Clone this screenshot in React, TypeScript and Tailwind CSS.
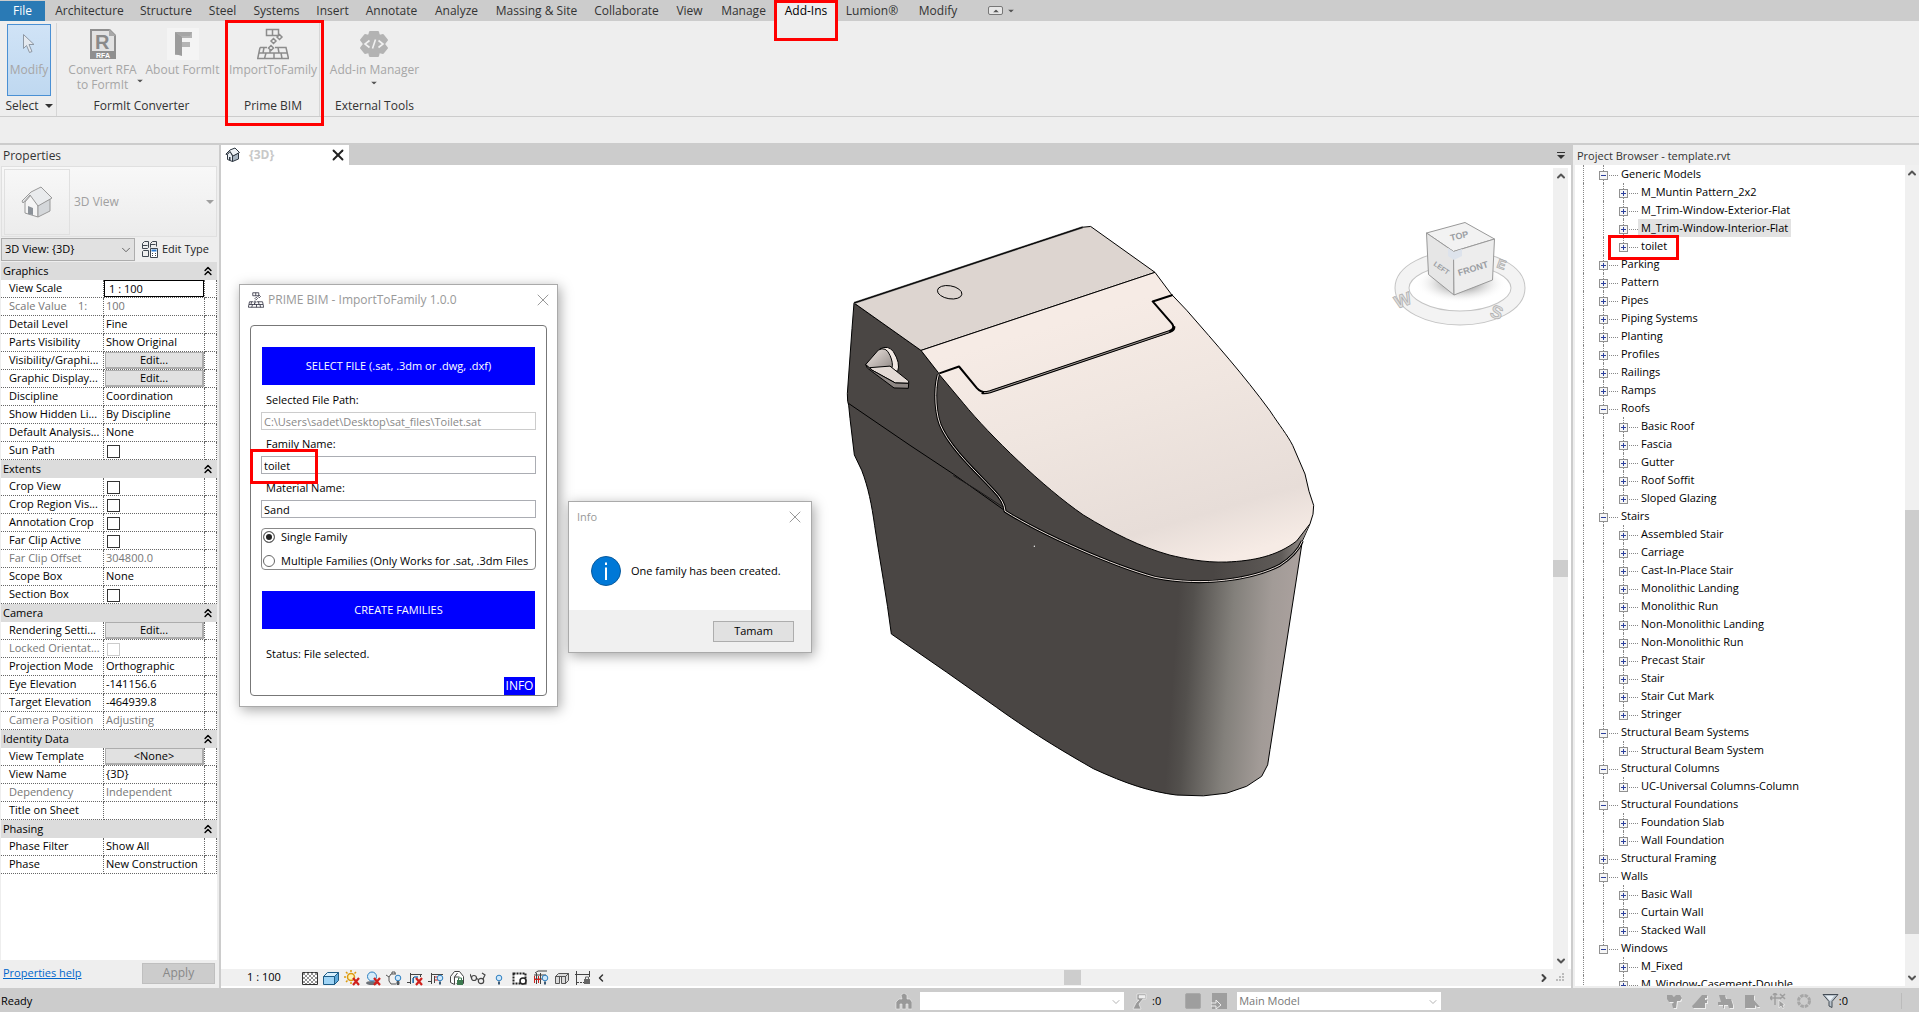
import type { ReactNode } from 'react';
import { X, ChevronUp, ChevronDown, ChevronLeft, ChevronRight, ChevronsUp } from 'lucide-react';

const tabs = [
  { name: 'Architecture', width: 'w-[85px]' },
  { name: 'Structure', width: 'w-[68px]' },
  { name: 'Steel', width: 'w-[45px]' },
  { name: 'Systems', width: 'w-[63px]' },
  { name: 'Insert', width: 'w-[49px]' },
  { name: 'Annotate', width: 'w-[69px]' },
  { name: 'Analyze', width: 'w-[61px]' },
  { name: 'Massing & Site', width: 'w-[99px]' },
  { name: 'Collaborate', width: 'w-[81px]' },
  { name: 'View', width: 'w-[45px]' },
  { name: 'Manage', width: 'w-[63px]' },
  { name: 'Add-Ins', width: 'w-[62px]' },
  { name: 'Lumion®', width: 'w-[70px]' },
  { name: 'Modify', width: 'w-[62px]' },
];

type Prop = {
  name: string;
  value?: string;
  kind?: 'text' | 'input' | 'button' | 'check';
  muted?: boolean;
};

const groups: { title: string; rows: Prop[] }[] = [
  {
    title: 'Graphics',
    rows: [
      { name: 'View Scale', value: '1 : 100', kind: 'input' },
      { name: 'Scale Value    1:', value: '100', muted: true },
      { name: 'Detail Level', value: 'Fine' },
      { name: 'Parts Visibility', value: 'Show Original' },
      { name: 'Visibility/Graphi...', value: 'Edit...', kind: 'button' },
      { name: 'Graphic Display...', value: 'Edit...', kind: 'button' },
      { name: 'Discipline', value: 'Coordination' },
      { name: 'Show Hidden Li...', value: 'By Discipline' },
      { name: 'Default Analysis...', value: 'None' },
      { name: 'Sun Path', kind: 'check' },
    ],
  },
  {
    title: 'Extents',
    rows: [
      { name: 'Crop View', kind: 'check' },
      { name: 'Crop Region Vis...', kind: 'check' },
      { name: 'Annotation Crop', kind: 'check' },
      { name: 'Far Clip Active', kind: 'check' },
      { name: 'Far Clip Offset', value: '304800.0', muted: true },
      { name: 'Scope Box', value: 'None' },
      { name: 'Section Box', kind: 'check' },
    ],
  },
  {
    title: 'Camera',
    rows: [
      { name: 'Rendering Setti...', value: 'Edit...', kind: 'button' },
      { name: 'Locked Orientat...', kind: 'check', muted: true },
      { name: 'Projection Mode', value: 'Orthographic' },
      { name: 'Eye Elevation', value: '-141156.6' },
      { name: 'Target Elevation', value: '-464939.8' },
      { name: 'Camera Position', value: 'Adjusting', muted: true },
    ],
  },
  {
    title: 'Identity Data',
    rows: [
      { name: 'View Template', value: '<None>', kind: 'button' },
      { name: 'View Name', value: '{3D}' },
      { name: 'Dependency', value: 'Independent', muted: true },
      { name: 'Title on Sheet', value: '' },
    ],
  },
  {
    title: 'Phasing',
    rows: [
      { name: 'Phase Filter', value: 'Show All' },
      { name: 'Phase', value: 'New Construction' },
    ],
  },
];

const tree: { name: string; children?: string[] }[] = [
  {
    name: 'Generic Models',
    children: ['M_Muntin Pattern_2x2', 'M_Trim-Window-Exterior-Flat', 'M_Trim-Window-Interior-Flat', 'toilet'],
  },
  { name: 'Parking' },
  { name: 'Pattern' },
  { name: 'Pipes' },
  { name: 'Piping Systems' },
  { name: 'Planting' },
  { name: 'Profiles' },
  { name: 'Railings' },
  { name: 'Ramps' },
  { name: 'Roofs', children: ['Basic Roof', 'Fascia', 'Gutter', 'Roof Soffit', 'Sloped Glazing'] },
  {
    name: 'Stairs',
    children: [
      'Assembled Stair',
      'Carriage',
      'Cast-In-Place Stair',
      'Monolithic Landing',
      'Monolithic Run',
      'Non-Monolithic Landing',
      'Non-Monolithic Run',
      'Precast Stair',
      'Stair',
      'Stair Cut Mark',
      'Stringer',
    ],
  },
  { name: 'Structural Beam Systems', children: ['Structural Beam System'] },
  { name: 'Structural Columns', children: ['UC-Universal Columns-Column'] },
  { name: 'Structural Foundations', children: ['Foundation Slab', 'Wall Foundation'] },
  { name: 'Structural Framing' },
  { name: 'Walls', children: ['Basic Wall', 'Curtain Wall', 'Stacked Wall'] },
  { name: 'Windows', children: ['M_Fixed', 'M_Window-Casement-Double'] },
];

/* ---------- icons ---------- */

function BricksIcon({ className }: { className: string }) {
  return (
    <svg viewBox="0 0 32 32" className={className} fill="none" stroke="currentColor" strokeWidth="1.5">
      <path d="M9.5 1.5h12v6h-12zM15.500 1.5v6" />
      <path d="M20 9l2.500-2.500 2.500 2.500-2.500 2.500zM14 13l2.500-2.500 2.500 2.500-2.500 2.500zM11.500 20l2.500-2.500 2.500 2.500-2.500 2.500z" />
      <path d="M3 19.500h7M18 19.500h11l2.500 11H.7L3 19.500M2 25h28M9 25l-1.500 5.500M17 25v5.500M24 25l1 5.500M13 22v3M21 19.500l1 5.500M7 19.500L6 25" />
    </svg>
  );
}

function RfaIcon() {
  return (
    <svg viewBox="0 0 26 30" className="h-[30px] w-[26px]">
      <path d="M0 0h20l6 6v24H0z" fill="#8f8f8f" />
      <path d="M2 2h17v5h5v15H2z" fill="#e2e2e2" />
      <path d="M19 0l7 7h-7z" fill="#a8a8a8" />
      <text x="5" y="20" fontSize="20" fontWeight="700" fill="#8a8a8a" fontFamily="Liberation Sans, sans-serif">R</text>
      <text x="6" y="29" fontSize="7" fontWeight="700" fill="#fff" fontFamily="Liberation Sans, sans-serif">RFA</text>
    </svg>
  );
}

function FormItIcon() {
  return (
    <svg viewBox="0 0 32 32" className="h-8 w-8">
      <path d="M0 0h32v32H0z" fill="#f4f4f4" />
      <path d="M8 4h17v6H15v4h8v5h-8v8H8z" fill="#b4b4b4" />
      <path d="M8 4l7 5v19l-7-2z" fill="#9c9c9c" />
      <path d="M8 4h17l-2 4H14z" fill="#a6a6a6" />
    </svg>
  );
}

function GearCodeIcon() {
  return (
    <svg viewBox="0 0 28 28" className="h-7 w-7">
      <path
        d="M10 2h8l1 4 4-1 4 5-3 4 3 4-4 5-4-1-1 4h-8l-1-4-4 1-4-5 3-4-3-4 4-5 4 1z"
        fill="#b3b3b3"
        stroke="#b3b3b3"
        strokeWidth="2"
        strokeLinejoin="round"
      />
      <path d="M9.500 10.500L5 14l4.500 3.500M18.500 10.500L23 14l-4.500 3.500M15.500 9.500l-3 9" fill="none" stroke="#f2f2f2" strokeWidth="1.6" />
    </svg>
  );
}

function CursorIcon() {
  return (
    <svg viewBox="0 0 14 22" className="h-[22px] w-[14px]">
      <path d="M1.500 1.500v14l3-3 3 7 2.500-1-3-7h5z" fill="#e4e9ef" stroke="#8e98a4" />
    </svg>
  );
}

function HouseIcon({ className }: { className: string }) {
  return (
    <svg viewBox="0 0 32 32" className={className} strokeLinejoin="round">
      <path d="M4 16v11l13 4V19L10 9z" fill="#f5f5f5" stroke="#999" />
      <path d="M17 19v12l12-6V13z" fill="#d4d7da" stroke="#999" />
      <path d="M1 15L10 6l10-5 11 11-14 8L9 9l-7 8z" fill="#e9ebed" stroke="#999" />
      <path d="M7 20l5 2v7l-5-1z" fill="#8c9299" />
    </svg>
  );
}

function TabHouseIcon() {
  return (
    <svg viewBox="0 0 16 16" className="mr-2 size-4" strokeLinejoin="round" stroke="#2d3640">
      <path d="M2.500 7.500v5l5 2V9L5 4z" fill="#e8edf2" />
      <path d="M7.500 9v5.500l6-2.500V6z" fill="#a9b6c2" />
      <path d="M1 7l4-4 5-2 4.500 4.500L8 9 5 4.500 1.500 8z" fill="#eef2f5" />
      <path d="M4 10h1.500v3.500L4 13z" fill="#2d3640" stroke="none" />
    </svg>
  );
}

function EditTypeIcon() {
  return (
    <svg viewBox="0 0 17 17" className="h-[17px] w-[17px]" fill="none" stroke="#3f4750">
      <path d="M1.500 2.500l2-2h4v6l-1 1h-5zM9.500 2.500l2-2h4v5M9.500 2.500v4M1.500 10.500l1-1h5v6h-6zM1.500 4.500h5M9.500 3.500h5" />
      <path d="M9.500 7.500h7v9h-7z" fill="#fff" />
      <path d="M10.500 9.500h5" stroke="#2a7ad0" strokeWidth="2" />
      <path d="M11 12.500h1M14 12.500h1M11 14.500h1M14 14.500h1" />
    </svg>
  );
}

function RedX() {
  return <path d="M9 8l6 7M15 8l-6 7" stroke="#d0201c" strokeWidth="2.200" fill="none" />;
}

function SmallBulb() {
  return (
    <g>
      <circle cx="12" cy="8" r="2.800" fill="#cfe8fb" stroke="#2e7fc0" />
      <path d="M11 11.500h2v3h-2z" fill="#3d5a75" />
    </g>
  );
}

const viewIcons: { label: string; art: ReactNode }[] = [
  {
    label: 'Detail level',
    art: (
      <g>
        <path d="M.5 2.500h15v12H.5z" fill="#fff" stroke="#333" />
        <path d="M1 5l3-3M1 9l7-7M1 13l11-11M4 14L15 3M8 14l7-7M12 14l3-3M12 2l3 3M8 2l7 7M4 2l11 11M1 3l11 11M1 7l7 7M1 11l3 3" stroke="#666" strokeWidth=".7" />
      </g>
    ),
  },
  {
    label: 'Visual style',
    art: (
      <g stroke="#1e5c86" strokeLinejoin="round">
        <path d="M.5 6.500h11v8H.5z" fill="#9fd4f5" />
        <path d="M.5 6.500l4-4h11l-4 4z" fill="#d7effd" />
        <path d="M11.500 6.500l4-4v8l-4 4z" fill="#5fa8d8" />
      </g>
    ),
  },
  {
    label: 'Sun path off',
    art: (
      <g>
        <circle cx="7" cy="7" r="3.500" fill="#fff2b8" stroke="#dc9a10" strokeWidth="1.500" />
        <path d="M7 0v2M0 7h2M2 2l1.500 1.500M12 2l-1.500 1.500M2 12l1.500-1.500M7 12v2" stroke="#dc9a10" strokeWidth="1.500" />
        <RedX />
      </g>
    ),
  },
  {
    label: 'Shadows off',
    art: (
      <g>
        <ellipse cx="7" cy="13" rx="6" ry="2" fill="#6d7278" />
        <circle cx="7" cy="6.500" r="4.500" fill="#d5ecfa" stroke="#2e7fc0" />
        <RedX />
      </g>
    ),
  },
  {
    label: 'Rendering dialog',
    art: (
      <g fill="none" stroke="#555">
        <path d="M0 5l3 2v4l2 3h5M3 7l2-3h5M6 4V2h3v2" />
        <SmallBulb />
      </g>
    ),
  },
  {
    label: 'Crop view off',
    art: (
      <g>
        <path d="M0 12.500h4M3.500 3v11M3 4.500h12M13.500 4v3M6.500 7v6" stroke="#444" fill="none" />
        <path d="M7 7h4M6 8v5" stroke="#2e7fc0" strokeWidth="1.500" />
        <RedX />
      </g>
    ),
  },
  {
    label: 'Crop region',
    art: (
      <g>
        <path d="M0 11.500h4M3.500 3v11M3 4.500h12M6.500 6v7" stroke="#444" fill="none" />
        <path d="M7 7h4M7 10h3" stroke="#d0201c" />
        <SmallBulb />
      </g>
    ),
  },
  {
    label: 'Locked 3D view',
    art: (
      <g>
        <path d="M1.500 6.500l4-5h5l4 5v7h-7M1.500 6.500v6l4 2V7l3-4M5.500 7h5" fill="#fff" stroke="#444" />
        <path d="M8 10h6v5H8z" fill="#3d7a50" />
        <path d="M9.500 10V8h3v2" stroke="#3d7a50" fill="none" />
      </g>
    ),
  },
  {
    label: 'Temporary hide',
    art: (
      <g fill="none" stroke="#444" strokeWidth="1.200">
        <circle cx="4" cy="8" r="2.500" />
        <circle cx="11" cy="11" r="2.700" />
        <path d="M1.500 8L0 4M6.500 8.500l2 1M13 9l2-4-3-2" />
      </g>
    ),
  },
  {
    label: 'Reveal hidden',
    art: (
      <g transform="translate(-4 0)">
        <SmallBulb />
      </g>
    ),
  },
  {
    label: 'Worksharing display',
    art: (
      <g>
        <path d="M1.500 3.500h12v10h-12z" fill="#fff" stroke="#222" strokeWidth="2" strokeDasharray="2 1" />
        <circle cx="11" cy="11" r="3" fill="#fff" stroke="#222" strokeWidth="1.500" />
      </g>
    ),
  },
  {
    label: 'Temporary view properties',
    art: (
      <g>
        <path d="M1 5h12M1 9h9M3.500 3v11M7.500 3v11M2 3l3-2h9" stroke="#444" fill="none" />
        <path d="M1.500 6v7M5.500 6v7M1 9.500h7" stroke="#d0201c" />
        <SmallBulb />
      </g>
    ),
  },
  {
    label: 'Analytical model',
    art: (
      <g stroke="#555" fill="#dadada">
        <path d="M1.500 6.500h4v7h-4zM7.500 6.500h4v7h-4zM1.500 6.500l3-3h10l-3 3zM11.500 6.500l3-3v7l-3 3z" />
      </g>
    ),
  },
  {
    label: 'Reveal constraints',
    art: (
      <g>
        <path d="M1.500 1v14M0 4.500h15M14.500 1v6" stroke="#444" fill="none" />
        <path d="M2 12.500h7" stroke="#444" strokeDasharray="2 1" />
        <path d="M9 9h6v5H9z" fill="#666" />
        <path d="M10.500 9V7h3v2" stroke="#666" fill="none" />
      </g>
    ),
  },
];

const selectIcons: { label: string; d: string }[] = [
  { label: 'Select links', d: 'M1 2h5l2 2 2-2h4l2 3-2 3h-3l-1 7H7l-1-4 2-2H3L1 6z' },
  { label: 'Select underlay', d: 'M0 13l3-3 7-8h5v3h-2v2h2v3h-2v5H1z' },
  { label: 'Select pinned', d: 'M1 2h6l1 4h5l2 6v3h-4l-1-3H6v3H5v-3H0V9h3z' },
  { label: 'Select by face', d: 'M1 2h9v5l6 7h-3l-2-2v3H1z' },
];

/* ---------- small pieces ---------- */

function Highlight({ className }: { className: string }) {
  return <div className={`pointer-events-none absolute z-20 border-3 border-[#ff0000] ${className}`} />;
}

function Caret({ className = '' }: { className?: string }) {
  return (
    <svg viewBox="0 0 8 4" className={`h-1 w-2 ${className}`}>
      <path d="M0 0h8L4 4z" fill="currentColor" />
    </svg>
  );
}

function RibbonPanel({ title, className, children }: { title: ReactNode; className: string; children: ReactNode }) {
  return (
    <section className={`flex h-[93px] flex-col justify-between border-r border-[#d6d6d6] ${className}`}>
      <div className="flex justify-center text-[#a6a6a6]">{children}</div>
      <h2 className="flex h-5 items-center justify-center gap-1.5 text-[#333]">{title}</h2>
    </section>
  );
}

function RibbonButton({ icon, label, className = '' }: { icon: ReactNode; label: ReactNode; className?: string }) {
  return (
    <button className={`mt-[3px] flex flex-col items-center whitespace-nowrap leading-[15px] ${className}`}>
      <span className="flex h-9 items-center">{icon}</span>
      <span>{label}</span>
    </button>
  );
}

/* ---------- ribbon ---------- */

function Ribbon() {
  return (
    <header className="relative shrink-0 bg-[#eee] text-xs">
      <nav className="flex h-[21px] items-stretch bg-[#ccc] text-[#333]">
        <button className="mr-0.5 mt-px w-[45px] bg-[#2a7ab5] text-white">File</button>
        {tabs.map(tab => (
          <button
            key={tab.name}
            className={`shrink-0 whitespace-nowrap ${tab.width} ${tab.name === 'Add-Ins' ? 'bg-[#eee] text-black' : ''}`}
          >
            {tab.name}
          </button>
        ))}
        <button aria-label="Minimize ribbon" className="ml-[19px] flex items-center gap-1 text-[#555]">
          <span className="flex h-[9px] w-[15px] items-center justify-center rounded-xs border border-[#777] bg-[#e6e6e6]">
            <Caret className="rotate-180 scale-75" />
          </span>
          <Caret className="scale-75" />
        </button>
      </nav>

      <div className="flex h-24 border-b border-[#ccc] pt-0.5">
        <RibbonPanel title={<>Select <Caret /></>} className="w-[57px] pl-0.5">
          <button className="mt-px flex h-[72px] w-11 flex-col items-center border border-[#4a90d4] bg-gradient-to-b from-[#d0e3f6] to-[#bfd8f0] leading-[15px]">
            <span className="flex h-[37px] items-center"><CursorIcon /></span>
            <span>Modify</span>
          </button>
        </RibbonPanel>
        <RibbonPanel title="FormIt Converter" className="w-[170px]">
          <RibbonButton
            icon={<RfaIcon />}
            className="ml-2 w-[66px]"
            label={<>Convert RFA<br />to FormIt</>}
          />
          <Caret className="mt-14 scale-75 text-[#555]" />
          <RibbonButton icon={<FormItIcon />} label="About FormIt" className="w-[78px]" />
        </RibbonPanel>
        <RibbonPanel title="Prime BIM" className="w-[93px]">
          <RibbonButton icon={<BricksIcon className="h-8 w-8 text-[#8c8c8c]" />} label="ImportToFamily" />
        </RibbonPanel>
        <RibbonPanel title="External Tools" className="w-[110px] border-transparent">
          <RibbonButton
            icon={<GearCodeIcon />}
            label={<>Add-in Manager<Caret className="mx-auto mt-1 scale-75 text-[#555]" /></>}
          />
        </RibbonPanel>
      </div>
      <div className="h-[28px] border-b-2 border-[#ccc]" />

      <Highlight className="left-[774px] top-0 h-[41px] w-16" />
      <Highlight className="left-[225px] top-5 h-[106px] w-[99px]" />
    </header>
  );
}

/* ---------- properties ---------- */

function PropertyValue({ row }: { row: Prop }) {
  if (row.kind === 'input') {
    return (
      <input
        aria-label={row.name}
        defaultValue={row.value}
        className="block h-[17px] w-full border border-black bg-white px-1 pb-px outline-none"
      />
    );
  }
  if (row.kind === 'button') {
    return (
      <button className="ml-px block h-[17px] w-[99px] border border-b-2 border-r-2 border-[#adadad] bg-[#e1e1e1] leading-3">
        {row.value}
      </button>
    );
  }
  if (row.kind === 'check') {
    return (
      <input
        type="checkbox"
        aria-label={row.name}
        className={`ml-[3px] mt-[3px] block size-[13px] appearance-none border bg-white ${row.muted ? 'border-[#ccc]' : 'border-[#333]'}`}
      />
    );
  }
  return <span className="pl-0.5">{row.value}</span>;
}

function PropertiesPanel() {
  return (
    <aside className="flex w-[219px] shrink-0 flex-col bg-[#eee] pl-px text-[11px]">
      <h2 className="h-5 pl-0.5 text-xs leading-[22px] text-[#333]">Properties</h2>
      <button className="mr-0.5 mt-px flex h-[71px] items-center border border-[#e0e0e0] bg-gradient-to-b from-[#f8f8f8] to-[#ececec] pl-0.5 text-xs text-[#a0a0a0]">
        <span className="flex size-[66px] items-center justify-center border border-[#e0e0e0]">
          <HouseIcon className="size-8" />
        </span>
        <span className="pl-1">3D View</span>
        <Caret className="ml-auto mr-0.5" />
      </button>
      <div className="flex h-[25px] items-center gap-1.5">
        <div className="relative">
          <select
            aria-label="Instance"
            className="block h-[23px] w-[134px] appearance-none border border-[#adadad] bg-[#e1e1e1] pl-[3px] text-black"
          >
            <option>3D View: {'{3D}'}</option>
          </select>
          <ChevronDown className="pointer-events-none absolute right-0.5 top-[5px] size-3.5 text-[#555]" strokeWidth={1.5} />
        </div>
        <button className="flex items-center gap-1 whitespace-nowrap text-[#222]">
          <EditTypeIcon />
          Edit Type
        </button>
      </div>

      <div className="min-h-0 flex-1 overflow-hidden border-r-2 border-[#eee] bg-white">
        <table className="w-full table-fixed border-separate border-spacing-0 text-left text-black">
          <colgroup>
            <col className="w-[103px]" />
            <col className="w-[101px]" />
            <col />
          </colgroup>
          {groups.map(group => (
            <tbody key={group.title}>
              <tr className="h-[18px] bg-[#dcdcdc]">
                <th colSpan={3} className="p-0 font-normal">
                  <div className="flex h-[18px] items-center justify-between pl-0.5 pr-0.5">
                    {group.title}
                    <ChevronsUp className="size-3.5" strokeWidth={2.5} />
                  </div>
                </th>
              </tr>
              {group.rows.map(row => (
                <tr key={row.name} className={`h-[18px] whitespace-nowrap leading-[15px] ${row.muted ? 'text-[#777]' : ''}`}>
                  <th className="overflow-hidden whitespace-pre border-b border-r border-dotted border-[#666] p-0 pl-2 align-top font-normal">
                    {row.name}
                  </th>
                  <td className="h-[18px] border-b border-r border-dotted border-[#666] p-0 align-top">
                    <PropertyValue row={row} />
                  </td>
                  <td className="border-b border-r border-dotted border-[#666] p-0" />
                </tr>
              ))}
            </tbody>
          ))}
        </table>
      </div>

      <div className="flex h-7 items-center justify-between pb-0.5 pl-0.5 pr-1">
        <a href="#help" className="text-[11px] text-[#0066cc] underline">Properties help</a>
        <button className="h-[21px] w-[73px] border border-[#bfbfbf] bg-[#ccc] text-xs text-[#888]">Apply</button>
      </div>
    </aside>
  );
}

/* ---------- 3D canvas ---------- */

function ToiletModel() {
  const lid =
    'M273 367L975 163L1023 219L1070 262C1160 352 1240 430 1320 525C1350 565 1370 585 1388 615L1425 690L1437 735L1451 772L1449 795L1440 820L1400 865C1340 905 1270 917 1190 920C1120 922 1060 910 1020 902C930 880 850 845 760 797C640 725 480 590 400 505L328 430L325 425Z';
  return (
    <svg viewBox="0 0 1530 1568" preserveAspectRatio="none" className="absolute left-[609px] top-[45px] h-[600px] w-[510px]">
      <defs>
        <linearGradient id="bowl" gradientUnits="userSpaceOnUse" x1="1030" y1="1200" x2="1400" y2="1230">
          <stop offset="0" stopColor="#4a4644" />
          <stop offset=".12" stopColor="#53504d" />
          <stop offset=".45" stopColor="#83807b" />
          <stop offset=".75" stopColor="#a29b97" />
          <stop offset="1" stopColor="#aca29f" />
        </linearGradient>
        <linearGradient id="rim" gradientUnits="userSpaceOnUse" x1="1150" y1="0" x2="1440" y2="0">
          <stop offset="0" stopColor="#4a4644" />
          <stop offset=".7" stopColor="#5f5b58" />
          <stop offset="1" stopColor="#a39b97" />
        </linearGradient>
        <linearGradient id="lid" gradientUnits="userSpaceOnUse" x1="820" y1="260" x2="1000" y2="960">
          <stop offset="0" stopColor="#f6ebe5" />
          <stop offset=".35" stopColor="#f0e6e0" />
          <stop offset=".82" stopColor="#e7ddd8" />
          <stop offset="1" stopColor="#f6ebe5" />
        </linearGradient>
        <linearGradient id="knob" x1="0" y1="0" x2="1" y2="1">
          <stop offset="0" stopColor="#f1e8e3" />
          <stop offset="1" stopColor="#8d8683" />
        </linearGradient>
      </defs>
      <g stroke="#000" strokeLinejoin="round" fill="none">
        <path
          vectorEffect="non-scaling-stroke"
          fill="url(#bowl)"
          d="M72 243L66 310L52 480L53 500L56 510L60 545L73 640L95 680C115 725 125 770 134 825C150 920 170 1010 184 1108L350 1208L500 1300C620 1375 720 1425 790 1460C890 1500 960 1520 1040 1529L1120 1531L1190 1524L1250 1506L1295 1480L1313 1450L1320 1410L1417 865L1440 820L1000 500L325 425L273 367Z"
        />
        <path
          vectorEffect="non-scaling-stroke"
          fill="url(#rim)"
          stroke="none"
          d="M325 425L525 788C640 850 850 930 975 960C1120 985 1270 965 1350 928Q1400 900 1417 862L1444 812Z"
        />
        <path vectorEffect="non-scaling-stroke" fill="#ddd5d0" d="M72 243L758 45L782 43L975 163L273 367Z" />
        <path vectorEffect="non-scaling-stroke" fill="url(#lid)" d={lid} />
        <path vectorEffect="non-scaling-stroke" strokeWidth="2" d="M72 243L758 45" stroke="#555" />
        <path vectorEffect="non-scaling-stroke" d="M72 243L758 45M55 505L240 615L370 690L525 786" />
        <path vectorEffect="non-scaling-stroke" d="M370 694L440 731L522 778" stroke="#1c1a1a" />
        <ellipse vectorEffect="non-scaling-stroke" cx="359" cy="215" rx="37" ry="17" transform="rotate(8 359 215)" />

        {/* groove round the seat hinge */}
        <path vectorEffect="non-scaling-stroke" strokeWidth="2" d="M328 427L387 409L440 465Q455 480 480 475L1018 318Q1038 312 1026 297L968 239L1028 222" />
        <path vectorEffect="non-scaling-stroke" strokeWidth="3" d="M455 477Q465 479 480 475L1018 318Q1034 313 1031 304" />
        <path vectorEffect="non-scaling-stroke" stroke="#a09894" d="M462 477Q470 478 480 475L1018 318" />
        {/* seams */}
        <path vectorEffect="non-scaling-stroke" strokeWidth="3" d="M325 430C312 470 315 540 338 575C370 630 440 685 490 732Q524 762 525 787C640 850 850 930 975 960C1120 985 1270 965 1350 928Q1400 900 1417 865" />
        <path vectorEffect="non-scaling-stroke" stroke="#e8ded9" d="M325 430C312 470 315 540 338 575C370 630 440 685 490 732Q524 762 525 787C640 850 850 930 975 960C1120 985 1270 965 1350 928Q1400 900 1417 865" />

        {/* flush lever */}
        <path vectorEffect="non-scaling-stroke" fill="#f1e8e3" d="M150 363Q175 352 190 370Q212 400 203 422L180 415Z" />
        <path vectorEffect="non-scaling-stroke" fill="url(#knob)" d="M107 404L145 366Q168 355 180 380Q190 400 186 412L130 422Z" />
        <path vectorEffect="non-scaling-stroke" fill="#e3dad5" d="M120 412L180 408L236 447L236 453L196 452L125 418Z" />
        <path vectorEffect="non-scaling-stroke" fill="#8d8683" d="M107 404L125 418L196 452L236 453L235 466L192 465L112 413Z" />
      </g>
      <circle cx="613" cy="879" r="2" fill="#fff" />
    </svg>
  );
}

function ViewCube() {
  return (
    <svg viewBox="0 0 140 110" className="absolute right-6 top-[52px] h-[110px] w-[140px]">
      <defs>
        <radialGradient id="shade">
          <stop offset=".3" stopColor="#999" stopOpacity=".8" />
          <stop offset="1" stopColor="#fff" stopOpacity="0" />
        </radialGradient>
      </defs>
      <ellipse cx="71" cy="71" rx="58" ry="30" fill="none" stroke="#c4c4c4" strokeWidth="15" />
      <ellipse cx="71" cy="71" rx="58" ry="30" fill="none" stroke="#f3f3f3" strokeWidth="13" />
      <ellipse cx="72" cy="66" rx="46" ry="20" fill="url(#shade)" />
      <g fontFamily="Liberation Sans, sans-serif" fontWeight="700" fill="#dedede" stroke="#aaa" strokeWidth=".7" fontSize="18">
        <text x="8" y="92" transform="rotate(-20 8 92)">W</text>
        <text x="100" y="99" transform="rotate(20 100 99)">S</text>
        <text x="107" y="50" transform="rotate(20 107 50)" fontSize="13">E</text>
      </g>
      <g stroke="#999" strokeWidth="1" strokeLinejoin="round">
        <path d="M37.500 16L76 5.500L105.500 22L64.500 34.500z" fill="#f2f2f2" />
        <path d="M37.500 16L64.500 34.500L65 78L39.500 57.500z" fill="#e6e6e6" />
        <path d="M64.500 34.500L105.500 22L103.500 63L65 78z" fill="#ededed" />
      </g>
      <path d="M59 31l6 4 8-3v7l-8 4-6-4z" fill="#dde3ec" />
      <g fontFamily="Liberation Sans, sans-serif" fontWeight="700" fill="#9b9ea3">
        <text x="62" y="24" fontSize="9" transform="rotate(-13 62 24)">TOP</text>
        <text x="44" y="48" fontSize="7" transform="rotate(35 44 48)">LEFT</text>
        <text x="70" y="59" fontSize="9" transform="rotate(-17 70 59)">FRONT</text>
      </g>
    </svg>
  );
}

function ImportDialog() {
  const field = 'block h-[18px] w-full border bg-white px-0.5 outline-none';
  return (
    <section
      role="dialog"
      aria-label="ImportToFamily"
      className="absolute left-[18px] top-[119px] w-[319px] border border-[#aaa] bg-white px-2.5 pb-2.5 text-[11px] text-black shadow-[2px_3px_12px_rgba(0,0,0,0.35)]"
    >
      <div className="flex h-[30px] items-center text-xs text-[#999]">
        <BricksIcon className="-ml-0.5 mr-1 size-4 text-[#223]" />
        PRIME BIM - ImportToFamily 1.0.0
        <button aria-label="Close" className="-mr-1.5 ml-auto"><X className="size-5" strokeWidth={1.2} /></button>
      </div>
      <div className="mt-2.5 flex h-[371px] flex-col rounded border border-[#777] px-2.5 pt-[21px]">
        <button className="mx-px h-[38px] shrink-0 bg-[#0000ff] pt-px text-white">SELECT FILE (.sat, .3dm or .dwg, .dxf)</button>
        <label htmlFor="path" className="h-[27px] pl-[5px] pt-0.5 leading-[26px]">Selected File Path:</label>
        <input id="path" className={`${field} shrink-0 border-[#ccc] text-[#888]`} defaultValue="C:\Users\sadet\Desktop\sat_files\Toilet.sat" />
        <label htmlFor="family" className="h-[26px] pl-[5px] pt-px leading-[26px]">Family Name:</label>
        <input id="family" className={`${field} shrink-0 border-[#abadb3]`} defaultValue="toilet" />
        <label htmlFor="material" className="h-[26px] pl-[5px] pt-px leading-[26px]">Material Name:</label>
        <input id="material" className={`${field} shrink-0 border-[#abadb3]`} defaultValue="Sand" />
        <div className="mt-2.5 flex h-[42px] shrink-0 flex-col gap-2 overflow-hidden rounded border border-[#888] pl-px">
          <label className="flex shrink-0 items-center gap-1.5 whitespace-nowrap leading-4">
            <input type="radio" name="mode" defaultChecked className="size-3 shrink-0 appearance-none rounded-full border border-[#666] bg-white checked:bg-[#222] checked:shadow-[inset_0_0_0_2px_#fff]" />
            Single Family
          </label>
          <label className="flex shrink-0 items-center gap-1.5 whitespace-nowrap leading-4">
            <input type="radio" name="mode" className="size-3 shrink-0 appearance-none rounded-full border border-[#666] bg-white" />
            Multiple Families (Only Works for .sat, .3dm Files
          </label>
        </div>
        <button className="mx-px mt-[21px] h-[38px] shrink-0 bg-[#0000ff] pt-px text-white">CREATE FAMILIES</button>
        <p className="mt-[15px] pl-[5px] leading-5">Status: File selected.</p>
        <button className="mr-px mt-auto h-[18px] w-[31px] self-end bg-[#0000ff] text-xs leading-[18px] text-white">INFO</button>
      </div>
      <Highlight className="left-2.5 top-[164px] h-[35px] w-[68px]" />
    </section>
  );
}

function InfoDialog() {
  return (
    <section
      role="dialog"
      aria-label="Info"
      className="absolute left-[347px] top-[336px] w-[244px] border border-[#aaa] bg-white text-[11px] text-black shadow-[2px_3px_12px_rgba(0,0,0,0.35)]"
    >
      <div className="flex h-[30px] items-center justify-between pl-2 pr-1.5 text-[11px] text-[#999]">
        Info
        <button aria-label="Close"><X className="size-5" strokeWidth={1.2} /></button>
      </div>
      <div className="flex h-[78px] items-center gap-2.5 pl-[22px]">
        <svg viewBox="0 0 30 30" className="size-[30px]">
          <circle cx="15" cy="15" r="14.500" fill="#0078d7" stroke="#0a5a9c" />
          <path d="M15 6.500v2.500M15 11.500V24" stroke="#fff" strokeWidth="2" />
        </svg>
        One family has been created.
      </div>
      <div className="flex h-[42px] items-center justify-end bg-[#f0f0f0] pr-[17px]">
        <button className="h-[21px] w-[81px] border border-[#adadad] bg-[#e1e1e1]">Tamam</button>
      </div>
    </section>
  );
}

function Viewport() {
  return (
    <main className="flex min-w-0 flex-1 flex-col border-x-2 border-[#ccc] bg-white">
      <div className="flex h-5 shrink-0 items-center bg-[#ccc] text-xs">
        <div className="flex h-5 w-32 items-center bg-white pl-1 pr-0.5 text-xs font-bold text-[#c8c8c8]">
          <TabHouseIcon />
          {'{3D}'}
          <button aria-label="Close view" className="ml-auto text-[#222]"><X className="size-[18px]" strokeWidth={2.5} /></button>
        </div>
        <button aria-label="View list" className="ml-auto mr-1.5 flex flex-col items-center gap-0.5 text-[#333]">
          <span className="h-px w-2 bg-[#333]" />
          <Caret />
        </button>
      </div>

      <div className="flex min-h-0 flex-1">
        <div className="relative min-w-0 flex-1 overflow-hidden">
          <ToiletModel />
          <ViewCube />
          <ImportDialog />
          <InfoDialog />
        </div>
        <div className="mr-[3px] mt-[3px] flex w-[15px] flex-col items-center justify-between bg-[#f0f0f0] text-[#555]">
          <ChevronUp className="mt-0.5 size-3" strokeWidth={4} />
          <div className="h-[17px] w-full bg-[#cdcdcd]" />
          <ChevronDown className="mb-0.5 size-3" strokeWidth={4} />
        </div>
      </div>

      <div className="mb-0.5 flex h-[17px] shrink-0 items-center bg-[#f0f0f0] text-[11px] text-black">
        <button className="w-[78px] pl-[26px] text-left">1 : 100</button>
        {viewIcons.map(icon => (
          <button key={icon.label} aria-label={icon.label} className="flex w-[21px] justify-center">
            <svg viewBox="0 0 16 16" className="size-4">{icon.art}</svg>
          </button>
        ))}
        <ChevronLeft className="ml-0.5 size-3 text-[#333]" strokeWidth={3} />
        <div className="flex h-[15px] flex-1 justify-center">
          <div className="w-[17px] bg-[#cdcdcd]" />
        </div>
        <ChevronRight className="mr-1.5 size-3 text-[#444]" strokeWidth={4} />
        <svg viewBox="0 0 9 9" className="mr-1.5 size-[9px]" fill="#bbb">
          <path d="M6 0h2v2H6zM3 3h2v2H3zM6 3h2v2H6zM0 6h2v2H0zM3 6h2v2H3zM6 6h2v2H6z" />
        </svg>
      </div>
    </main>
  );
}

/* ---------- project browser ---------- */

function Toggle({ open, last = false }: { open: boolean; last?: boolean }) {
  return (
    <span className="flex h-[18px] w-[9px] flex-col items-center">
      <span className="h-1.5 border-l border-dotted border-[#888]" />
      <button
        aria-label={open ? 'Collapse' : 'Expand'}
        className="flex size-[9px] shrink-0 items-center justify-center border border-[#919191] bg-[#f6f6f6]"
      >
        <svg viewBox="0 0 5 5" className="size-[5px]" fill="#2b3f9c">
          <path d={open ? 'M0 2h5v1H0z' : 'M0 2h5v1H0zM2 0h1v5H2z'} />
        </svg>
      </button>
      {!last && <span className="flex-1 border-l border-dotted border-[#888]" />}
    </span>
  );
}

function Dash() {
  return <span className="ml-px mt-2.5 w-[9px] border-t border-dotted border-[#888]" />;
}

function ProjectBrowser() {
  return (
    <aside className="flex w-[346px] shrink-0 flex-col bg-[#eee] text-[11px]">
      <h2 className="h-5 shrink-0 pl-1 leading-[22px] text-[#333]">Project Browser - template.rvt</h2>
      <div className="mb-0.5 ml-0.5 flex min-h-0 flex-1">
        <div className="relative min-w-0 flex-1 overflow-hidden bg-white text-black">
          <ul>
            {tree.map((node, i) => {
              const lastNode = i === tree.length - 1;
              return (
                <li key={node.name}>
                  <div className="flex h-[18px] whitespace-nowrap leading-[18px]">
                    <span className="mr-[15px] w-[9px] border-r border-dotted border-[#888]" />
                    <Toggle open={!!node.children} last={lastNode} />
                    <Dash />
                    <span className="pl-[3px]">{node.name}</span>
                  </div>
                  {node.children && (
                    <ul>
                      {node.children.map((child, j) => (
                        <li key={child} className="flex h-[18px] whitespace-nowrap leading-[18px]">
                          <span className="mr-[15px] w-[9px] border-r border-dotted border-[#888]" />
                          <span className="mr-[11px] flex w-[9px] justify-center">
                            {!lastNode && <span className="border-l border-dotted border-[#888]" />}
                          </span>
                          <Toggle open={false} last={!lastNode && j === node.children!.length - 1} />
                          <Dash />
                          <span className={`px-[3px] ${child === 'M_Trim-Window-Interior-Flat' ? 'bg-[#e2e2e2]' : ''}`}>{child}</span>
                        </li>
                      ))}
                    </ul>
                  )}
                </li>
              );
            })}
          </ul>
          <Highlight className="left-[33px] top-[70px] h-[25px] w-[71px]" />
        </div>
        <div className="flex w-[14px] flex-col items-center bg-[#f0f0f0] text-[#555]">
          <ChevronUp className="my-0.5 size-3 shrink-0" strokeWidth={4} />
          <div className="flex-[328]" />
          <div className="w-full flex-[423] bg-[#cdcdcd]" />
          <div className="flex-[36]" />
          <ChevronDown className="my-0.5 size-3 shrink-0" strokeWidth={4} />
        </div>
      </div>
    </aside>
  );
}

/* ---------- status bar ---------- */

function StatusSelect({ label, option }: { label: string; option: string }) {
  return (
    <div className="relative">
      <select aria-label={label} className="block h-[18px] w-[204px] appearance-none bg-white pl-0.5 text-[11px] leading-[18px] text-[#777]">
        <option>{option}</option>
      </select>
      <ChevronDown className="pointer-events-none absolute right-0.5 top-1 size-3 text-[#999]" strokeWidth={1.5} />
    </div>
  );
}

function StatusBar() {
  return (
    <footer className="flex h-6 shrink-0 items-center bg-[#ccc] pt-0.5 text-[11px] text-black">
      <span className="w-[895px] pl-px">Ready</span>
      <button aria-label="Worksets" className="mr-2">
        <svg viewBox="0 0 17 17" className="size-[17px]" fill="#999" stroke="#eee" strokeWidth=".6">
          <path d="M6 2l3-2 3 2v4h3l2 3v7h-4v-5h-2v5H7v-5H5v5H1V9l3-3h3z" />
        </svg>
      </button>
      <StatusSelect label="Active workset" option="" />
      <button aria-label="Editing requests" className="ml-2 flex items-center gap-1">
        <svg viewBox="0 0 16 17" className="h-[17px] w-4" fill="#999" stroke="#eee" strokeWidth=".7">
          <path d="M5 1h9v5h-3l-4 5 2 5H1l3-6 3-3H5z" />
          <path d="M7 2.500h6v2.500H7z" fill="#eee" />
        </svg>
        :0
      </button>
      <button aria-label="Design options" className="ml-6 size-4 rounded-xs border border-[#aaa] bg-[#9e9e9e]" />
      <button aria-label="Add to set" className="mx-2.5">
        <svg viewBox="0 0 16 16" className="size-4">
          <path d="M1 0h15v16H1z" fill="#9e9e9e" />
          <path d="M0 10h5V7l5 5-5 4v-3H0z" fill="#9e9e9e" stroke="#eee" />
        </svg>
      </button>
      <StatusSelect label="Design option" option="Main Model" />
      <div className="ml-auto flex items-center gap-2.5 border-r border-[#bbb] pr-[53px]">
        {selectIcons.map(icon => (
          <button key={icon.label} aria-label={icon.label}>
            <svg viewBox="0 0 16 16" className="size-4">
              <path d={icon.d} fill="#eee" transform="translate(1 1)" />
              <path d={icon.d} fill="#9e9e9e" />
            </svg>
          </button>
        ))}
        <button aria-label="Drag on selection">
          <svg viewBox="0 0 16 16" className="size-4" fill="none" stroke="#9e9e9e" strokeWidth="1.500">
            <path d="M5 0v12M0 5h11M3 2l2-2 2 2M2 3L0 5l2 2M10 1l5 5M15 1l-5 5" />
            <path d="M9 7v8l2-2 2 3 1-1-1-3h2z" fill="#9e9e9e" stroke="#eee" strokeWidth=".7" />
          </svg>
        </button>
        <svg viewBox="0 0 16 16" className="size-4">
          <circle cx="8" cy="8" r="5.500" fill="none" stroke="#a6a6a6" strokeWidth="3" strokeDasharray="3.300 1" />
        </svg>
        <button aria-label="Filter" className="flex items-center">
          <svg viewBox="0 0 17 16" className="h-4 w-[17px]">
            <path d="M1 1.500h15l-6 7v6l-3-1.500V8.500z" fill="#b9c3cc" stroke="#444c55" />
            <path d="M4 3h8l-4 5z" fill="#e8eef3" />
          </svg>
          :0
        </button>
      </div>
      <div className="w-[17px]" />
    </footer>
  );
}

export default function App() {
  return (
    <div className="flex h-screen flex-col overflow-hidden bg-[#eee] font-['Open_Sans','Noto_Sans',sans-serif]">
      <Ribbon />
      <div className="flex min-h-0 flex-1">
        <PropertiesPanel />
        <Viewport />
        <ProjectBrowser />
      </div>
      <StatusBar />
    </div>
  );
}
